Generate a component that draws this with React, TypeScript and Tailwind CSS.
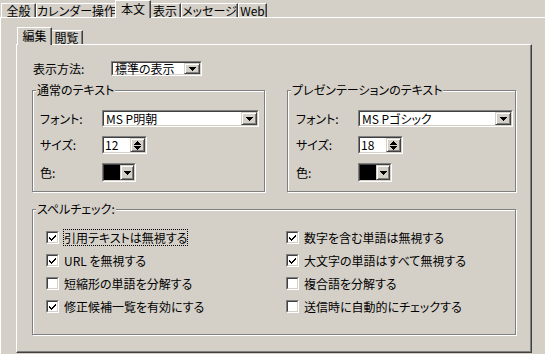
import React from 'react'

function Tab({ label, w, active }: { label: string; w: string; active?: boolean }) {
  if (active) {
    return (
      <div
        className={`${w} h-[18px] mb-[-1px] mx-[-2px] relative z-10 bg-[#d4d0c8] flex items-center justify-center whitespace-nowrap pb-[2px] border-t border-l border-r border-t-white border-l-white border-r-[#404040] shadow-[inset_-1px_0_0_#808080]`}
      >
        {label}
      </div>
    )
  }
  return (
    <div
      className={`${w} h-[14px] flex items-center justify-center whitespace-nowrap border-t border-l border-r border-t-white border-l-white border-r-[#404040] shadow-[inset_-1px_0_0_#808080]`}
    >
      {label}
    </div>
  )
}

function TriDown() {
  return (
    <svg width="7" height="4" viewBox="0 0 7 4" shapeRendering="crispEdges">
      <path d="M0 0h7v1H0zM1 1h5v1H1zM2 2h3v1H2zM3 3h1v1H3z" fill="#000" />
    </svg>
  )
}

function DropBtn({ w }: { w: string }) {
  return (
    <div className={`${w} h-full shrink-0 bg-[#d4d0c8] border border-t-[#d4d0c8] border-l-[#d4d0c8] border-r-[#404040] border-b-[#404040] shadow-[inset_1px_1px_0_#fff,inset_-1px_-1px_0_#808080] flex items-center justify-center`}>
      <TriDown />
    </div>
  )
}

function Sunken({ className, children }: { className: string; children: React.ReactNode }) {
  return (
    <div className={`${className} shrink-0 border border-t-[#808080] border-l-[#808080] border-r-white border-b-white`}>
      <div className="w-full h-full border border-t-[#404040] border-l-[#404040] border-r-[#d4d0c8] border-b-[#d4d0c8] bg-white flex">
        {children}
      </div>
    </div>
  )
}

function Select({ className, text }: { className: string; text: string }) {
  return (
    <Sunken className={className}>
      <div className="flex-1 flex items-center pl-[2px] whitespace-nowrap">{text}</div>
      <DropBtn w="w-[16px]" />
    </Sunken>
  )
}

function Spinner({ value }: { value: string }) {
  return (
    <Sunken className="w-[45px] h-[18px]">
      <div className="flex-1 flex items-center pl-[1px]">{value}</div>
      <div className="w-[15px] h-full bg-[#d4d0c8] border border-t-[#d4d0c8] border-l-[#d4d0c8] border-r-[#404040] border-b-[#404040] shadow-[inset_1px_1px_0_#fff,inset_-1px_-1px_0_#808080] flex flex-col items-center justify-center gap-[1px]">
        <svg width="7" height="4" viewBox="0 0 7 4" shapeRendering="crispEdges">
          <path d="M3 0h1v1H3zM2 1h3v1H2zM1 2h5v1H1zM0 3h7v1H0z" fill="#000" />
        </svg>
        <svg width="7" height="4" viewBox="0 0 7 4" shapeRendering="crispEdges">
          <path d="M0 0h7v1H0zM1 1h5v1H1zM2 2h3v1H2zM3 3h1v1H3z" fill="#000" />
        </svg>
      </div>
    </Sunken>
  )
}

function ColorPick() {
  return (
    <Sunken className="w-[34px] h-[19px]">
      <div className="flex-1 bg-black" />
      <DropBtn w="w-[14px]" />
    </Sunken>
  )
}

function Check({ checked }: { checked?: boolean }) {
  return (
    <div className="w-[13px] h-[13px] shrink-0 border border-t-[#808080] border-l-[#808080] border-r-white border-b-white">
      <div className="w-full h-full border border-t-[#404040] border-l-[#404040] border-r-[#d4d0c8] border-b-[#d4d0c8] bg-white flex items-end justify-center pb-[1px]">
        {checked && (
          <svg width="7" height="6" viewBox="0 0 7 6" shapeRendering="crispEdges">
            <path d="M6 0h1v1H6zM5 1h2v1H5zM0 2h1v1H0zM4 2h2v1H4zM0 3h2v1H0zM3 3h2v1H3zM1 4h3v1H1zM2 5h1v1H2z" fill="#000" />
          </svg>
        )}
      </div>
    </div>
  )
}

function Group({ legend, className, children }: { legend: string; className: string; children?: React.ReactNode }) {
  return (
    <div className={`${className} relative border border-[#808080] shadow-[inset_1px_1px_0_#fff,1px_1px_0_#fff]`}>
      <span className="absolute left-[3px] top-[-8px] px-[1px] bg-[#d4d0c8] leading-[14px] whitespace-nowrap">{legend}</span>
      {children}
    </div>
  )
}

function FontGroup({ legend, className, font, size, pl, selW }: { legend: string; className: string; font: string; size: string; pl: string; selW: string }) {
  return (
    <Group legend={legend} className={className}>
      <div className={`${pl} pt-[19px] flex flex-col`}>
        <div className="flex items-center">
          <div className="w-[62px]">フォント:</div>
          <Select className={`${selW} h-[17px]`} text={font} />
        </div>
        <div className="flex items-center mt-[9px]">
          <div className="w-[62px]">サイズ:</div>
          <Spinner value={size} />
        </div>
        <div className="flex items-center mt-[9px]">
          <div className="w-[62px]">色:</div>
          <ColorPick />
        </div>
      </div>
    </Group>
  )
}

const spell = [
  { label: '引用テキストは無視する', checked: true, focus: true },
  { label: '数字を含む単語は無視する', checked: true },
  { label: 'URL を無視する', checked: true },
  { label: '大文字の単語はすべて無視する', checked: true },
  { label: '短縮形の単語を分解する', checked: false },
  { label: '複合語を分解する', checked: false },
  { label: '修正候補一覧を有効にする', checked: true },
  { label: '送信時に自動的にチェックする', checked: false },
]

export default function App() {
  return (
    <div className="w-[545px] h-[354px] bg-[#d4d0c8] overflow-hidden flex flex-col text-[12px] leading-none text-black font-['Noto_Sans_CJK_JP',sans-serif] [font-feature-settings:'palt']">
      <div className="flex items-end h-[17px] pl-[1px] shrink-0">
        <Tab label="全般" w="w-[35px]" />
        <Tab label="カレンダー操作" w="w-[81px]" />
        <Tab label="本文" w="w-[36px]" active />
        <Tab label="表示" w="w-[32px]" />
        <Tab label="メッセージ" w="w-[57px]" />
        <Tab label="Web" w="w-[29px]" />
      </div>
      <div className="flex-1 border-t border-l border-t-white border-l-white pt-[10px] pl-[15px]">
        <div className="flex items-end h-[16px] pl-[3px]">
          <Tab label="編集" w="w-[35px]" active />
          <Tab label="閲覧" w="w-[33px]" />
        </div>
        <div className="w-[516px] h-[309px] border border-t-white border-l-white border-r-[#404040] border-b-[#404040] shadow-[inset_-1px_-1px_0_#808080]">
          <div className="pl-[16px] pt-[16px] flex items-center">
            <div className="w-[78px]">表示方法:</div>
            <Select className="w-[91px] h-[15px]" text="標準の表示" />
          </div>
          <div className="flex ml-[15px] mt-[14px] gap-[22px]">
            <FontGroup legend="通常のテキスト" className="w-[233px] h-[102px]" font="MS P明朝" size="12" pl="pl-[7px]" selW="w-[157px]" />
            <FontGroup legend="プレゼンテーションのテキスト" className="w-[229px] h-[102px]" font="MS Pゴシック" size="18" pl="pl-[8px]" selW="w-[155px]" />
          </div>
          <Group legend="スペルチェック:" className="ml-[15px] mt-[17px] w-[484px] h-[126px]">
            <div className="pt-[21px] pl-[13px] grid grid-cols-[240px_1fr] gap-y-[10px]">
              {spell.map((s) => (
                <div key={s.label} className="flex items-center h-[13px] gap-[4px]">
                  <Check checked={s.checked} />
                  <span
                    className={`h-[17px] flex items-center whitespace-nowrap border ${s.focus ? 'border-dotted border-black' : 'border-transparent'}`}
                  >
                    {s.label}
                  </span>
                </div>
              ))}
            </div>
          </Group>
        </div>
      </div>
    </div>
  )
}
